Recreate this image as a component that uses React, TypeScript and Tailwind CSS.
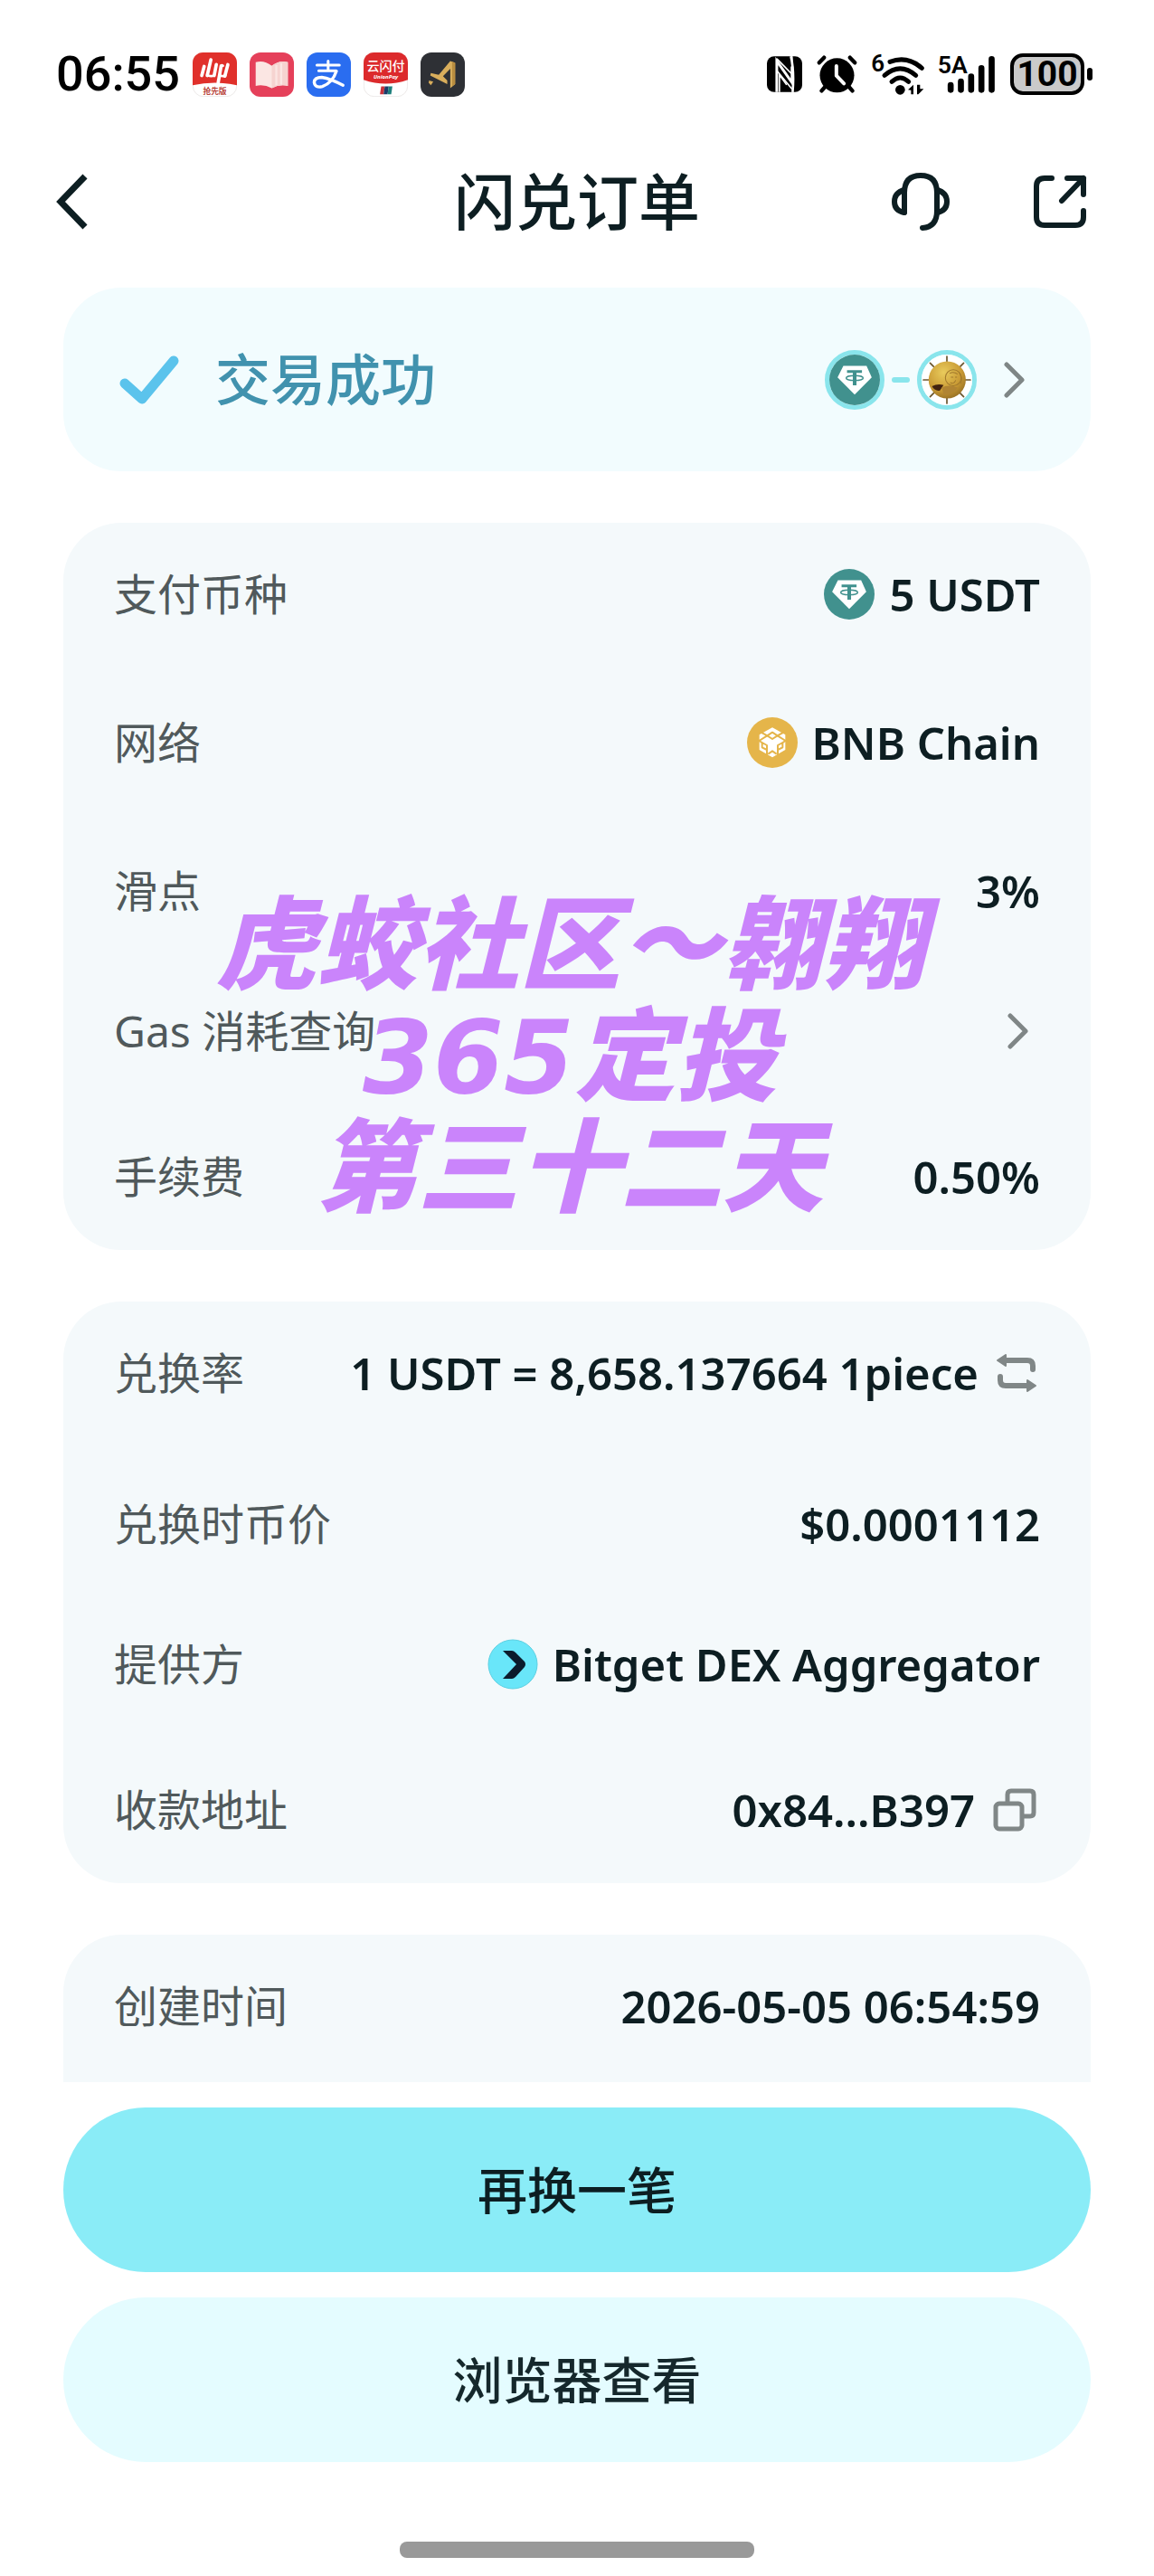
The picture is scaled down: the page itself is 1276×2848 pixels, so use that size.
import type { ReactNode } from "react"

const fontStack = "font-['Noto_Sans','Noto_Sans_CJK_SC',sans-serif]"

/* ---------- status bar icons ---------- */

function ExpressAppIcon() {
  return (
    <svg viewBox="0 0 146 146" className="size-[49px] shrink-0" aria-hidden="true">
      <rect x="1" y="1" width="144" height="144" rx="34" fill="#fff" stroke="#e3dedd" strokeWidth="2" />
      <path d="M0 108V34A34 34 0 0 1 34 0h78a34 34 0 0 1 34 34v74Q73 92 0 108Z" fill="#e0302b" />
      <g stroke="#fff" strokeWidth="11" strokeLinecap="round" fill="none">
        <path d="M38 46 30 76M60 24 48 76M78 40 71 76M94 44 84 100M116 40 106 78" />
        <path d="M71 76Q62 80 50 76M108 76Q100 80 90 76M94 44Q96 40 100 44" strokeWidth="8" />
      </g>
      <text x="73" y="136" textAnchor="middle" fontSize="26" fontWeight="700" fill="#b8443a">抢先版</text>
    </svg>
  )
}

function BookAppIcon() {
  return (
    <svg viewBox="0 0 146 146" className="size-[49px] shrink-0" aria-hidden="true">
      <rect width="146" height="146" rx="36" fill="#e5405a" />
      <path d="M20 32Q48 24 73 44Q98 24 126 32V110Q98 104 73 118Q48 104 20 110Z" fill="#fbe6e3" />
      <path d="M73 44Q98 24 126 32V110Q98 104 73 118Z" fill="#f6d3d0" />
      <path d="M88 42V108M104 36V106" stroke="#fbe6e3" strokeWidth="7" />
    </svg>
  )
}

function AlipayAppIcon() {
  return (
    <svg viewBox="0 0 146 146" className="size-[49px] shrink-0" aria-hidden="true">
      <rect width="146" height="146" rx="36" fill="#2a6df0" />
      <g fill="none" stroke="#fff" strokeLinecap="round">
        <path d="M34 42H108M71 28V60M40 60H98" strokeWidth="9" />
        <path d="M98 62Q86 100 52 112Q28 118 25 98Q26 82 50 82Q78 86 120 108" strokeWidth="10" />
      </g>
    </svg>
  )
}

function UnionPayAppIcon() {
  return (
    <svg viewBox="0 0 146 146" className="size-[49px] shrink-0" aria-hidden="true">
      <rect x="1" y="1" width="144" height="144" rx="34" fill="#fff" stroke="#e3dedd" strokeWidth="2" />
      <path d="M0 90V34A34 34 0 0 1 34 0h78a34 34 0 0 1 34 34v56Q73 116 0 90Z" fill="#dc2a2c" />
      <text x="73" y="59" textAnchor="middle" fontSize="42" fontWeight="500" fill="#fff">云闪付</text>
      <text x="73" y="85" textAnchor="middle" fontSize="18" fontStyle="italic" fontWeight="700" fill="#fff">UnionPay</text>
      <path d="M58 112h12l-4 26H54Z" fill="#c8323c" />
      <path d="M70 112h13l-4 26H66Z" fill="#1c3c68" />
      <path d="M83 112h12l-4 26H79Z" fill="#1d7f7c" />
    </svg>
  )
}

function GoldAppIcon() {
  return (
    <svg viewBox="0 0 146 146" className="size-[49px] shrink-0" aria-hidden="true">
      <rect width="146" height="146" rx="36" fill="#2e3035" />
      <path d="M98 28 114 34V104L98 118V54L74 78 88 92V104L32 76 34 68 60 74Z" fill="#d9ae5c" />
      <path d="M28 92 42 96 34 108 27 100Z" fill="#d9ae5c" />
      <path d="M114 34V104L104 112V30Z" fill="#b98d40" />
    </svg>
  )
}

function NfcIcon() {
  return (
    <svg viewBox="0 0 118 120" className="h-[40px] w-[39px] shrink-0" aria-hidden="true">
      <rect width="118" height="120" rx="24" fill="#000" />
      <path d="M33 120V16L84 88V34" fill="none" stroke="#fff" strokeWidth="9" />
      <path d="M33 8 84 60V0M33 48 84 110" fill="none" stroke="#fff" strokeWidth="5" />
      <path d="M80 0Q92 50 86 120" fill="none" stroke="#fff" strokeWidth="8" />
      <path d="M42 120V62L66 96" fill="none" stroke="#fff" strokeWidth="5" />
    </svg>
  )
}

function AlarmIcon() {
  return (
    <svg viewBox="0 0 134 126" className="h-[42px] w-[45px] shrink-0" aria-hidden="true">
      <circle cx="67" cy="67" r="57" fill="#000" />
      <path d="M8 25 24 8M126 25 110 8" stroke="#000" strokeWidth="13" strokeLinecap="round" />
      <path d="M30 102 16 118M104 102 118 118" stroke="#000" strokeWidth="13" strokeLinecap="round" />
      <path d="M65 36V68L90 94" fill="none" stroke="#fff" strokeWidth="12" strokeLinecap="round" strokeLinejoin="round" />
    </svg>
  )
}

function WifiIcon() {
  return (
    <svg viewBox="0 0 174 138" className="h-[46px] w-[58px] shrink-0 overflow-visible" aria-hidden="true">
      <text x="-2" y="60" fontSize="78" fontWeight="600" className="font-[Roboto,sans-serif]">6</text>
      <g fill="none" stroke="#000" strokeLinecap="round" strokeWidth="15">
        <path d="M60 28Q118 6 166 49" />
        <path d="M42 73Q94 28 146 73" />
        <path d="M66 94Q94 68 122 94" />
      </g>
      <circle cx="94" cy="121" r="16" />
      <path d="M120 121 138 104V136H130V122ZM150 104H160V118H172L154 136H150Z" />
    </svg>
  )
}

function SignalIcon() {
  return (
    <svg viewBox="0 0 188 132" className="h-[44px] w-[63px] shrink-0 overflow-visible" aria-hidden="true">
      <text x="-4" y="62" fontSize="80" fontWeight="600" className="font-[Roboto,sans-serif]">5A</text>
      <g stroke="#000" strokeWidth="20" strokeLinecap="round">
        <path d="M39 102V118M73 90V118M107 74V118M141 46V118M175 16V118" />
      </g>
    </svg>
  )
}

function Battery() {
  return (
    <div className="flex items-center gap-[3px]">
      <div className="flex h-[46px] w-[82px] items-center justify-center rounded-[14px] border-4 border-black bg-[#cacaca] font-[Roboto,sans-serif] text-[39px] font-bold leading-none text-black">
        100
      </div>
      <div className="h-[14px] w-[6px] rounded-full bg-black" />
    </div>
  )
}

/* ---------- page icons ---------- */

function BackIcon() {
  return (
    <svg viewBox="0 0 36 62" className="h-[62px] w-[36px]" aria-hidden="true">
      <path d="M32 3 5 31 32 59" fill="none" stroke="#0d1e22" strokeWidth="7" />
    </svg>
  )
}

function HeadsetIcon() {
  return (
    <svg viewBox="0 0 64 64" className="size-16" aria-hidden="true">
      <g fill="none" stroke="#0d1e22" strokeWidth="6" strokeLinejoin="round" strokeLinecap="round">
        <path d="M14 44V22Q14 3 32 3Q50 3 50 22V42Q50 60 34 61" />
        <path d="M14 19Q3 22 3 32Q3 42 14 44M50 19Q61 22 61 32Q61 42 50 44" />
      </g>
    </svg>
  )
}

function ShareIcon() {
  return (
    <svg viewBox="0 0 60 60" className="size-[60px]" aria-hidden="true">
      <g fill="none" stroke="#0d1e22" strokeWidth="6" strokeLinejoin="round" strokeLinecap="round">
        <path d="M21 4H13Q4 4 4 13V47Q4 56 13 56H47Q56 56 56 47V40" />
        <path d="M38 4H56V22M56 4 32 29" />
      </g>
    </svg>
  )
}

function CheckIcon() {
  return (
    <svg viewBox="0 0 66 54" className="h-[54px] w-[66px]" aria-hidden="true">
      <path d="M6 31 25 48 60 6" fill="none" stroke="#5bc3ec" strokeWidth="11" strokeLinecap="round" strokeLinejoin="round" />
    </svg>
  )
}

function ChevronIcon() {
  return (
    <svg viewBox="0 0 24 40" className="h-[40px] w-[24px]" aria-hidden="true">
      <path d="M3 3 20 20 3 37" fill="none" stroke="#7f8686" strokeWidth="5" strokeLinecap="round" strokeLinejoin="round" />
    </svg>
  )
}

function UsdtIcon() {
  return (
    <svg viewBox="0 0 166 166" className="size-14 shrink-0" aria-hidden="true">
      <circle cx="83" cy="83" r="83" fill="#41918e" />
      <path d="M46 37H122L139 75 83 131 27 75Z" fill="#fff" />
      <path d="M58 51H107V60H89V101H77V60H58Z" fill="#41918e" />
      <ellipse cx="83" cy="77" rx="28" ry="8" fill="none" stroke="#41918e" strokeWidth="4" />
    </svg>
  )
}

function PieceIcon() {
  return (
    <svg viewBox="0 0 166 166" className="size-14 shrink-0" aria-hidden="true">
      <defs>
        <radialGradient id="piece-gold" cx="0.4" cy="0.3" r="0.8">
          <stop offset="0" stopColor="#e9cb5c" />
          <stop offset="0.6" stopColor="#c99a34" />
          <stop offset="1" stopColor="#8a6420" />
        </radialGradient>
      </defs>
      <circle cx="83" cy="83" r="83" fill="#fff" />
      <g stroke="#6b552c" strokeWidth="5" strokeLinecap="round">
        <path d="M83 6V160M6 83H160M28 28 138 138M138 28 28 138" />
      </g>
      <circle cx="84" cy="83" r="61" fill="url(#piece-gold)" />
      <g fill="none" stroke="#a0782c" strokeWidth="3">
        <circle cx="104" cy="76" r="26" />
        <path d="M92 62Q104 54 118 64M96 74H104M110 74H116M94 92Q106 98 112 84M124 60Q136 76 128 96" />
      </g>
      <path d="M34 104Q52 94 72 100L60 118Q42 120 34 104Z" fill="#42220f" />
      <path d="M66 108Q90 96 118 108Q104 132 72 130Z" fill="#b08433" />
    </svg>
  )
}

function BnbChainIcon() {
  return (
    <svg viewBox="0 0 168 168" className="size-14 shrink-0" aria-hidden="true">
      <circle cx="84" cy="84" r="84" fill="#e5b54a" />
      <path d="M84 34 127 58V108L84 133 41 108V58Z" fill="#fff" />
      <g fill="none" stroke="#e5b54a" strokeWidth="6" strokeLinejoin="round">
        <path d="M84 50 101 61 84 72 67 61Z" />
        <path d="M67 61 38 45M101 61 130 45M67 61 40 78M101 61 128 78" />
        <path d="M50 84 66 93V108L50 100ZM118 84 102 93V108L118 100Z" />
        <path d="M66 108V128M102 108V128M50 84 38 77M118 84 130 77M70 122 84 112 98 122" />
      </g>
    </svg>
  )
}

function BitgetIcon() {
  return (
    <svg viewBox="0 0 56 56" className="size-14 shrink-0" aria-hidden="true">
      <circle cx="28" cy="28" r="27" fill="#69e6f9" stroke="#5ad0e2" strokeWidth="1" />
      <path d="M17 13H27Q29 13 31 15L41 25Q43 28 41 31L31 42Q29 44 27 44H17L32 28Z" fill="#0b1c2c" />
    </svg>
  )
}

function SwapIcon() {
  return (
    <svg viewBox="0 0 44 42" className="h-[42px] w-[44px]" aria-hidden="true">
      <g fill="none" stroke="#808787" strokeWidth="6" strokeLinecap="round">
        <path d="M9 7H34Q40 7 40 13V17M4 25V29Q4 35 10 35H34" />
      </g>
      <path d="M1 7 10 1V13ZM43 35 34 29V41Z" fill="#808787" stroke="#808787" strokeWidth="2" strokeLinejoin="round" />
    </svg>
  )
}

function CopyIcon() {
  return (
    <svg viewBox="0 0 48 48" className="size-12" aria-hidden="true">
      <g fill="none" stroke="#808787" strokeWidth="5">
        <rect x="3" y="17" width="29" height="28" rx="4" />
        <path d="M16 16V7Q16 3 20 3H41Q45 3 45 7V27Q45 31 41 31H33" />
      </g>
    </svg>
  )
}

/* ---------- layout pieces ---------- */

interface RowProps {
  label: string
  className?: string
  children: ReactNode
}

function Row({ label, className = "", children }: RowProps) {
  return (
    <div className={`flex h-14 items-center justify-between ${className}`}>
      <dt className="whitespace-nowrap text-[48px] leading-[54px] text-[#50595b]">{label}</dt>
      <dd className="flex items-center gap-4 whitespace-nowrap text-[49px] font-semibold leading-[54px] text-[#0d1e22]">
        {children}
      </dd>
    </div>
  )
}

function StatusBar() {
  return (
    <div className="flex h-[164px] items-center justify-between pl-[62px] pr-[68px]">
      <div className="flex items-center gap-[14px]">
        <span className="font-[Roboto,sans-serif] text-[54px] font-medium leading-none text-black">06:55</span>
        <ExpressAppIcon />
        <BookAppIcon />
        <AlipayAppIcon />
        <UnionPayAppIcon />
        <GoldAppIcon />
      </div>
      <div className="flex items-center gap-4">
        <NfcIcon />
        <AlarmIcon />
        <WifiIcon />
        <SignalIcon />
        <Battery />
      </div>
    </div>
  )
}

export default function App() {
  return (
    <div className={`min-h-screen bg-white ${fontStack}`} lang="zh-CN">
      <StatusBar />

      <header className="grid h-[118px] grid-cols-[1fr_auto_1fr] items-center px-[62px]">
        <button type="button" aria-label="返回" className="justify-self-start">
          <BackIcon />
        </button>
        <h1 className="text-[68px] font-medium leading-none text-[#0d1e22]">闪兑订单</h1>
        <div className="flex items-center gap-[92px] justify-self-end pr-3">
          <button type="button" aria-label="客服"><HeadsetIcon /></button>
          <button type="button" aria-label="分享"><ShareIcon /></button>
        </div>
      </header>

      <main className="flex flex-col gap-[57px] px-[70px] pt-9">
        {/* Order status */}
        <a href="#status" className="flex h-[203px] items-center justify-between rounded-[64px] bg-[#f2fcfe] pl-[62px] pr-[72px]">
          <div className="flex items-center gap-10">
            <CheckIcon />
            <span className="text-[61px] font-medium leading-none text-[#4192ae]">交易成功</span>
          </div>
          <div className="flex items-center gap-2">
            <span className="rounded-full border-[5px] border-[#8ae5ec]"><UsdtIcon /></span>
            <span className="h-[6px] w-5 rounded-full bg-[#8ae5ec]" />
            <span className="rounded-full border-[5px] border-[#8ae5ec]"><PieceIcon /></span>
            <span className="pl-[22px]"><ChevronIcon /></span>
          </div>
        </a>

        {/* Payment details */}
        <section className="relative rounded-[64px] bg-[#f4f9fb] px-14 pb-[53px] pt-[51px]">
          <dl>
            <Row label="支付币种">
              <UsdtIcon />
              5 USDT
            </Row>
            <Row label="网络" className="mt-[108px]">
              <BnbChainIcon />
              BNB Chain
            </Row>
            <Row label="滑点" className="mt-[108px]">3%</Row>
            <Row label="Gas 消耗查询" className="mt-[99px]">
              <button type="button" aria-label="Gas 消耗查询" className="pr-3"><ChevronIcon /></button>
            </Row>
            <Row label="手续费" className="mt-[105px]">0.50%</Row>
          </dl>
          <div className="pointer-events-none absolute inset-x-0 top-[407px] pr-4 text-center font-['DejaVu_Sans','Noto_Sans_CJK_SC',sans-serif] text-[112px] font-black italic leading-[123px] text-[#ca84fb]">
            <p>虎蛟社区～翱翔</p>
            <p>365定投</p>
            <p>第三十二天</p>
          </div>
        </section>

        {/* Rate and provider */}
        <section className="rounded-[64px] bg-[#f4f9fb] px-14 pb-[53px] pt-[51px]">
          <dl>
            <Row label="兑换率">
              1 USDT = 8,658.137664 1piece
              <button type="button" aria-label="切换" className="px-1"><SwapIcon /></button>
            </Row>
            <Row label="兑换时币价" className="mt-[111px]">$0.0001112</Row>
            <Row label="提供方" className="mt-[99px]">
              <BitgetIcon />
              Bitget DEX Aggregator
            </Row>
            <Row label="收款地址" className="mt-[105px]">
              0x84...B397
              <button type="button" aria-label="复制" className="px-1"><CopyIcon /></button>
            </Row>
          </dl>
        </section>

        <section className="rounded-t-[64px] bg-[#f4f9fb] px-14 pb-14 pt-[51px]">
          <dl>
            <Row label="创建时间">2026-05-05 06:54:59</Row>
          </dl>
        </section>
      </main>

      <footer className="flex flex-col gap-7 px-[70px] pb-5 pt-7">
        <button type="button" className="h-[182px] rounded-full bg-[#8aecf7] text-[55px] font-medium text-[#0d1e22]">
          再换一笔
        </button>
        <button type="button" className="h-[182px] rounded-full bg-[#e4fcff] text-[55px] font-medium text-[#15282c]">
          浏览器查看
        </button>
        <div className="mx-auto mt-[60px] h-[18px] w-[392px] rounded-lg bg-[#999]" />
      </footer>
    </div>
  )
}
